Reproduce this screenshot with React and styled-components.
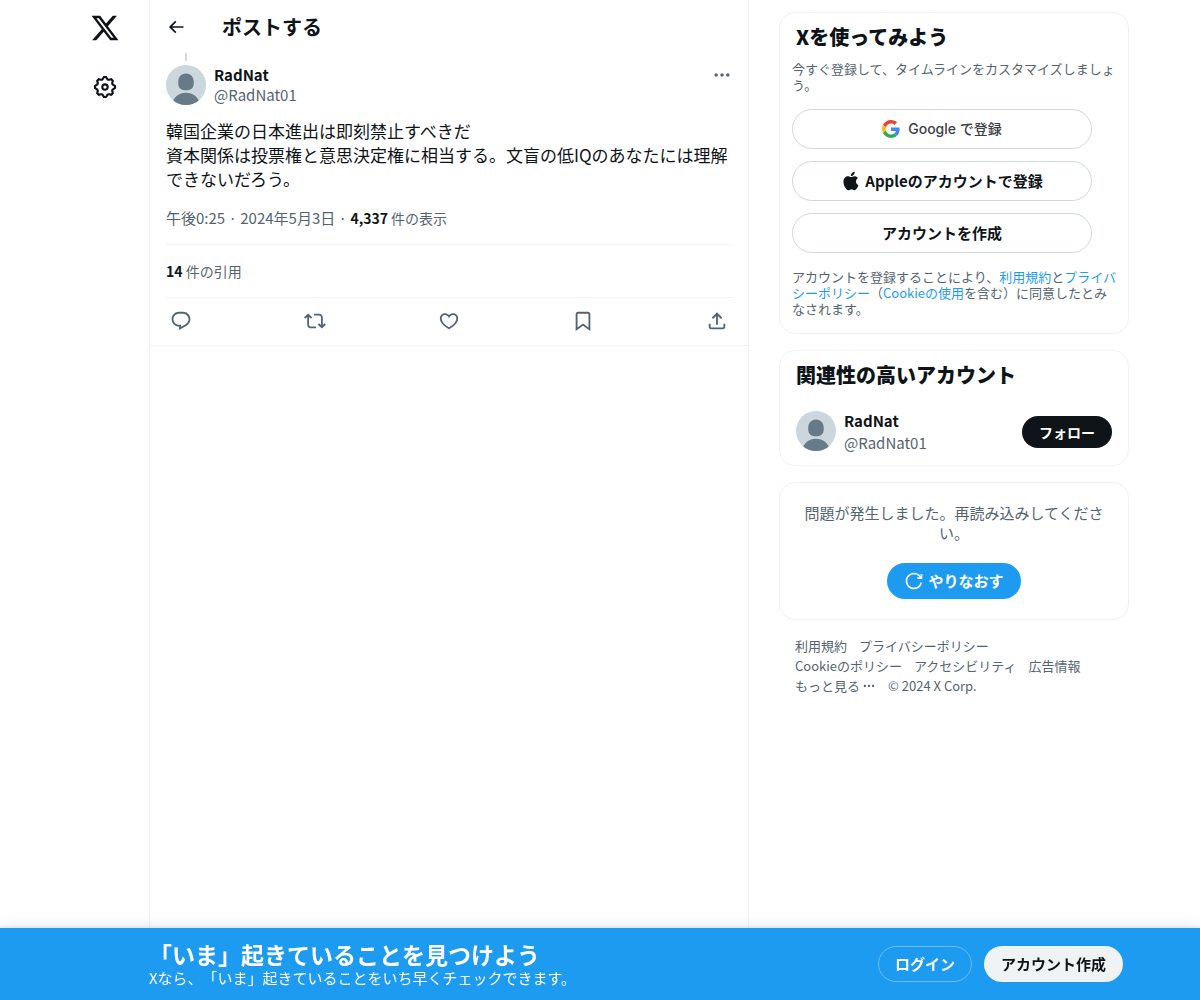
import React from 'react';
import styled, { createGlobalStyle } from 'styled-components';

const GlobalStyle = createGlobalStyle`
  *, *::before, *::after {
    box-sizing: border-box;
  }

  body {
    margin: 0;
    background: #fff;
    color: #0f1419;
    font-family: "Noto Sans CJK JP", sans-serif;
    font-size: 15px;
    line-height: 20px;
    text-spacing-trim: space-all;
  }

  button {
    font-family: inherit;
    cursor: pointer;
  }

  h1, h2, p {
    margin: 0;
  }
`;

const paths = {
  x: 'M18.244 2.25h3.308l-7.227 8.26 8.502 11.24H16.17l-5.214-6.817L4.99 21.75H1.68l7.73-8.835L1.254 2.25H8.08l4.713 6.231zm-1.161 17.52h1.833L7.084 4.126H5.117z',
  settings: 'M10.54 1.75h2.92l1.57 2.36c.11.17.32.25.53.21l2.53-.59 2.17 2.17-.58 2.54c-.05.2.04.41.21.53l2.36 1.57v2.92l-2.36 1.57c-.17.12-.26.33-.21.53l.58 2.54-2.17 2.17-2.53-.59c-.21-.04-.42.04-.53.21l-1.57 2.36h-2.92l-1.58-2.36c-.11-.17-.32-.25-.52-.21l-2.54.59-2.17-2.17.58-2.54c.05-.2-.03-.41-.21-.53l-2.35-1.57v-2.92L4.1 8.97c.18-.12.26-.33.21-.53L3.73 5.9 5.9 3.73l2.54.59c.2.04.41-.04.52-.21l1.58-2.36zm1.07 2l-.98 1.47C10.05 6.08 9 6.5 7.99 6.27l-1.46-.34-.6.6.33 1.46c.24 1.01-.18 2.07-1.05 2.64l-1.46.98v.78l1.46.98c.87.57 1.29 1.63 1.05 2.64l-.33 1.46.6.6 1.46-.34c1.01-.23 2.06.19 2.64 1.05l.98 1.47h.78l.97-1.47c.58-.86 1.63-1.28 2.65-1.05l1.45.34.61-.6-.34-1.46c-.23-1.01.18-2.07 1.05-2.64l1.47-.98v-.78l-1.47-.98c-.87-.57-1.28-1.63-1.05-2.64l.34-1.46-.61-.6-1.45.34c-1.02.23-2.07-.19-2.65-1.05l-.97-1.47h-.78zM12 10.5c-.83 0-1.5.67-1.5 1.5s.67 1.5 1.5 1.5c.82 0 1.5-.67 1.5-1.5s-.68-1.5-1.5-1.5zM8.5 12c0-1.93 1.56-3.5 3.5-3.5 1.93 0 3.5 1.57 3.5 3.5s-1.57 3.5-3.5 3.5c-1.94 0-3.5-1.57-3.5-3.5z',
  back: 'M7.414 13l5.043 5.04-1.414 1.42L3.586 12l7.457-7.46 1.414 1.42L7.414 11H21v2H7.414z',
  more: 'M3 12c0-1.1.9-2 2-2s2 .9 2 2-.9 2-2 2-2-.9-2-2zm9 2c1.1 0 2-.9 2-2s-.9-2-2-2-2 .9-2 2 .9 2 2 2zm7 0c1.1 0 2-.9 2-2s-.9-2-2-2-2 .9-2 2 .9 2 2 2z',
  reply: 'M1.751 10c0-4.42 3.584-8 8.005-8h4.366c4.49 0 8.129 3.64 8.129 8.13 0 2.96-1.607 5.68-4.196 7.11l-8.054 4.46v-3.69h-.067c-4.49.1-8.183-3.51-8.183-8.01zm8.005-6c-3.317 0-6.005 2.69-6.005 6 0 3.37 2.77 6.08 6.138 6.01l.351-.01h1.761v2.3l5.087-2.81c1.951-1.08 3.163-3.13 3.163-5.36 0-3.39-2.744-6.13-6.129-6.13H9.756z',
  repost: 'M4.5 3.88l4.432 4.14-1.364 1.46L5.5 7.55V16c0 1.1.896 2 2 2H13v2H7.5c-2.209 0-4-1.79-4-4V7.55L1.432 9.48.068 8.02 4.5 3.88zM16.5 6H11V4h5.5c2.209 0 4 1.79 4 4v8.45l2.068-1.93 1.364 1.46-4.432 4.14-4.432-4.14 1.364-1.46 2.068 1.93V8c0-1.1-.896-2-2-2z',
  like: 'M16.697 5.5c-1.222-.06-2.679.51-3.89 2.16l-.805 1.09-.806-1.09C9.984 6.01 8.526 5.44 7.304 5.5c-1.243.07-2.349.78-2.91 1.91-.552 1.12-.633 2.78.479 4.82 1.074 1.97 3.257 4.27 7.129 6.61 3.87-2.34 6.052-4.64 7.126-6.61 1.111-2.04 1.03-3.7.477-4.82-.561-1.13-1.666-1.84-2.908-1.91zm4.187 7.69c-1.351 2.48-4.001 5.12-8.379 7.67l-.503.3-.504-.3c-4.379-2.55-7.029-5.19-8.382-7.67-1.36-2.5-1.41-4.86-.514-6.67.887-1.79 2.647-2.91 4.601-3.01 1.651-.09 3.368.56 4.798 2.01 1.429-1.45 3.146-2.1 4.796-2.01 1.954.1 3.714 1.22 4.601 3.01.896 1.81.846 4.17-.514 6.67z',
  bookmark: 'M4 4.5C4 3.12 5.119 2 6.5 2h11C18.881 2 20 3.12 20 4.5v18.44l-8-5.71-8 5.71V4.5zM6.5 4c-.276 0-.5.22-.5.5v14.56l6-4.29 6 4.29V4.5c0-.28-.224-.5-.5-.5h-11z',
  share: 'M12 2.59l5.7 5.7-1.41 1.42L13 6.41V16h-2V6.41l-3.3 3.3-1.41-1.42L12 2.59zM21 15l-.02 3.51c0 1.38-1.12 2.49-2.5 2.49H5.5C4.11 21 3 19.88 3 18.5V15h2v3.5c0 .28.22.5.5.5h12.98c.28 0 .5-.22.5-.5L19 15h2z',
  retry: 'M12 4c-4.418 0-8 3.58-8 8s3.582 8 8 8c3.806 0 6.993-2.66 7.802-6.22l1.95.44C20.742 18.67 16.76 22 12 22 6.477 22 2 17.52 2 12S6.477 2 12 2c3.272 0 6.176 1.57 8 4V3.5h2v6h-6v-2h2.616C17.175 5.39 14.749 4 12 4z',
  apple: 'M16.365 1.43c0 1.14-.493 2.27-1.177 3.08-.744.9-1.99 1.57-2.987 1.57-.12 0-.23-.02-.3-.03-.01-.06-.04-.22-.04-.39 0-1.15.572-2.27 1.206-2.98.804-.94 2.142-1.64 3.248-1.68.03.13.05.28.05.43zm4.565 15.71c-.03.07-.463 1.58-1.518 3.12-.945 1.34-1.94 2.71-3.43 2.71-1.517 0-1.9-.88-3.63-.88-1.698 0-2.302.91-3.67.91-1.377 0-2.332-1.26-3.428-2.8-1.287-1.82-2.323-4.63-2.323-7.28 0-4.28 2.797-6.55 5.552-6.55 1.448 0 2.675.95 3.6.95.865 0 2.222-1.01 3.902-1.01.613 0 2.886.06 4.374 2.19-.13.09-2.383 1.37-2.383 4.19 0 3.26 2.854 4.42 2.955 4.45z',
};

const Svg = styled.svg`
  display: block;
  flex: none;
  width: ${(props) => props.$size}px;
  height: ${(props) => props.$size}px;
  fill: currentColor;
`;

const Page = styled.div`
  display: flex;
  justify-content: center;
  min-height: 100vh;
  padding-right: 10px;
`;

const Nav = styled.nav`
  display: flex;
  flex: 0 0 88px;
  flex-direction: column;
  align-items: center;
  gap: 31px;
  padding-top: 14px;
`;

const NavLink = styled.a`
  display: flex;
  align-items: center;
  justify-content: center;
  height: 28px;
  color: #0f1419;
`;

const Column = styled.main`
  flex: 0 1 600px;
  min-width: 0;
  border: solid #eff3f4;
  border-width: 0 1px;
`;

const ColumnHeader = styled.header`
  display: flex;
  align-items: center;
  gap: 36px;
  height: 53px;
  padding: 0 16px;
`;

const ColumnTitle = styled.h1`
  font-size: 20px;
  font-weight: 700;
  line-height: 24px;
`;

const IconButton = styled.button`
  display: flex;
  padding: 0;
  border: 0;
  background: none;
  color: ${(props) => props.$color || '#0f1419'};
`;

const Post = styled.article`
  padding: 0 16px;
  border-bottom: 1px solid #eff3f4;
`;

const ThreadLine = styled.div`
  width: 2px;
  height: 8px;
  margin: 0 0 4px 19px;
  background: #cfd9de;
`;

const User = styled.div`
  display: flex;
  align-items: flex-start;
  gap: 8px;
`;

const Names = styled.div`
  display: flex;
  flex: 1;
  flex-direction: column;
  gap: ${(props) => props.$gap || 0}px;
`;

const Name = styled.a`
  color: #0f1419;
  font-weight: 700;
  text-decoration: none;
`;

const Handle = styled(Name)`
  color: #536471;
  font-weight: 400;
`;

const Body = styled.p`
  padding: 14px 0 1px;
  font-size: 17px;
  line-height: 24px;
  white-space: pre-line;
`;

const Meta = styled.div`
  padding: 16px 0;
  border-bottom: 1px solid #eff3f4;
  color: #536471;
`;

const Count = styled.span`
  font-size: 14px;

  strong {
    color: #0f1419;
    font-weight: 700;
  }
`;

const Actions = styled.div`
  display: flex;
  align-items: center;
  justify-content: space-between;
  height: 47px;
  padding: 0 4px 2px;
`;

const Sidebar = styled.aside`
  display: flex;
  flex: 0 0 350px;
  flex-direction: column;
  gap: 16px;
  margin-left: 30px;
  padding: 12px 0 100px;
`;

const Card = styled.section`
  border: 1px solid #eff3f4;
  border-radius: 16px;
`;

const SignupCard = styled(Card)`
  padding: 12px 10px 16px 12px;
`;

const AccountCard = styled(Card)`
  padding: 12px 16px;
`;

const ErrorCard = styled(Card)`
  display: flex;
  flex-direction: column;
  align-items: center;
  gap: 20px;
  padding: 20px;
  color: #536471;
  text-align: center;
`;

const CardTitle = styled.h2`
  margin: 0 0 ${(props) => props.$space}px ${(props) => props.$indent || 0}px;
  font-size: 20px;
  font-weight: 800;
  line-height: 24px;
`;

const Note = styled.p`
  color: #536471;
  font-size: 13px;
  line-height: 16px;

  a {
    color: #1d9bf0;
    text-decoration: none;
  }
`;

const ButtonStack = styled.div`
  display: flex;
  flex-direction: column;
  gap: 12px;
  max-width: 300px;
  margin: 16px 0;
`;

const Pill = styled.button`
  display: flex;
  align-items: center;
  justify-content: center;
  gap: 4px;
  height: ${(props) => props.$height || 36}px;
  padding: 0 16px;
  border: 1px solid ${(props) => props.$border || 'transparent'};
  border-radius: 20px;
  background: ${(props) => props.$background || 'transparent'};
  color: ${(props) => props.$color || '#0f1419'};
  font-size: ${(props) => props.$size || 15}px;
  font-weight: 700;
  line-height: 20px;
  white-space: nowrap;
`;

const GooglePill = styled(Pill)`
  gap: 8px;
  color: #3c4043;
  font-family: Inter, "Noto Sans CJK JP", sans-serif;
  font-weight: 500;
`;

const FollowPill = styled(Pill)`
  align-self: center;
`;

const FooterNav = styled.nav`
  display: flex;
  flex-wrap: wrap;
  padding: 0 16px;
  font-size: 13px;
`;

const FooterItem = styled.a`
  display: flex;
  align-items: center;
  gap: 2px;
  padding-right: 12px;
  color: #536471;
  text-decoration: none;
`;

const BottomBar = styled.div`
  position: fixed;
  right: 0;
  bottom: 0;
  left: 0;
  display: flex;
  justify-content: center;
  padding-right: 10px;
  background: #1d9bf0;
  color: #fff;
  box-shadow: rgba(101, 119, 134, 0.2) 0 0 15px, rgba(101, 119, 134, 0.15) 0 0 3px 1px;
`;

const BarInner = styled.div`
  display: flex;
  flex: 0 1 1068px;
  align-items: center;
  justify-content: space-between;
  height: 72px;
  padding: 0 6px 0 88px;
`;

const BarTitle = styled.p`
  font-size: 23px;
  font-weight: 700;
  line-height: 28px;
`;

const BarButtons = styled.div`
  display: flex;
  gap: 12px;
`;

function Icon({ name, size = 22 }) {
  return (
    <Svg $size={size} viewBox="0 0 24 24" aria-hidden="true">
      <path d={paths[name]} />
    </Svg>
  );
}

function GoogleLogo() {
  return (
    <Svg $size={18} viewBox="0 0 48 48" aria-hidden="true">
      <path fill="#EA4335" d="M24 9.5c3.54 0 6.71 1.22 9.21 3.6l6.85-6.85C35.9 2.38 30.47 0 24 0 14.62 0 6.51 5.38 2.56 13.22l7.98 6.19C12.43 13.72 17.74 9.5 24 9.5z" />
      <path fill="#4285F4" d="M46.98 24.55c0-1.57-.15-3.09-.38-4.55H24v9.02h12.94c-.58 2.96-2.26 5.48-4.78 7.18l7.73 6c4.51-4.18 7.09-10.36 7.09-17.65z" />
      <path fill="#FBBC05" d="M10.53 28.59c-.48-1.45-.76-2.99-.76-4.59s.27-3.14.76-4.59l-7.98-6.19C.92 16.46 0 20.12 0 24c0 3.88.92 7.54 2.56 10.78l7.97-6.19z" />
      <path fill="#34A853" d="M24 48c6.48 0 11.93-2.13 15.89-5.81l-7.73-6c-2.15 1.45-4.92 2.3-8.16 2.3-6.26 0-11.57-4.22-13.47-9.91l-7.98 6.19C6.51 42.62 14.62 48 24 48z" />
    </Svg>
  );
}

function Avatar() {
  return (
    <Svg $size={40} viewBox="0 0 40 40" role="img" aria-label="RadNat">
      <clipPath id="avatar">
        <circle cx="20" cy="20" r="20" />
      </clipPath>
      <g clipPath="url(#avatar)">
        <path fill="#ccd6dd" d="M0 0h40v40H0z" />
        <path fill="#667a88" d="M20 8.500c5 0 7.800 3.500 7.800 8.800 0 5.500-2.200 8-7.800 8s-7.800-2.500-7.800-8C12.200 12 15 8.500 20 8.500zM6 40c1.500-8.500 7-12.300 14-12.300s12.500 3.800 14 12.300z" />
      </g>
    </Svg>
  );
}

const actions = [
  ['reply', '返信'],
  ['repost', 'リポスト'],
  ['like', 'いいね'],
  ['bookmark', 'ブックマーク'],
  ['share', '共有'],
];

export default function App() {
  return (
    <>
      <GlobalStyle />
      <Page>
        <Nav>
          <NavLink href="#" aria-label="X"><Icon name="x" size={30} /></NavLink>
          <NavLink href="#" aria-label="設定"><Icon name="settings" size={26} /></NavLink>
        </Nav>

        <Column>
          <ColumnHeader>
            <IconButton aria-label="戻る"><Icon name="back" size={20} /></IconButton>
            <ColumnTitle>ポストする</ColumnTitle>
          </ColumnHeader>
          <Post>
            <ThreadLine />
            <User>
              <Avatar />
              <Names>
                <Name href="#">RadNat</Name>
                <Handle href="#">@RadNat01</Handle>
              </Names>
              <IconButton $color="#536471" aria-label="もっと見る"><Icon name="more" size={20} /></IconButton>
            </User>
            <Body>
              {'韓国企業の日本進出は即刻禁止すべきだ\n資本関係は投票権と意思決定権に相当する。文盲の低IQのあなたには理解できないだろう。'}
            </Body>
            <Meta>
              午後0:25 · 2024年5月3日 · <Count><strong>4,337</strong> 件の表示</Count>
            </Meta>
            <Meta>
              <Count><strong>14</strong> 件の引用</Count>
            </Meta>
            <Actions>
              {actions.map(([name, label]) => (
                <IconButton key={name} $color="#536471" aria-label={label}>
                  <Icon name={name} />
                </IconButton>
              ))}
            </Actions>
          </Post>
        </Column>

        <Sidebar>
          <SignupCard>
            <CardTitle $space={12} $indent={4}>Xを使ってみよう</CardTitle>
            <Note>今すぐ登録して、タイムラインをカスタマイズしましょう。</Note>
            <ButtonStack>
              <GooglePill $height={40} $border="#cfd9de" $size={14}>
                <GoogleLogo />
                Google で登録
              </GooglePill>
              <Pill $height={40} $border="#cfd9de">
                <Icon name="apple" size={20} />
                Appleのアカウントで登録
              </Pill>
              <Pill $height={40} $border="#cfd9de">アカウントを作成</Pill>
            </ButtonStack>
            <Note>
              アカウントを登録することにより、<a href="#">利用規約</a>と<a href="#">プライバシーポリシー</a>（<a href="#">Cookieの使用</a>を含む）に同意したとみなされます。
            </Note>
          </SignupCard>

          <AccountCard>
            <CardTitle $space={24}>関連性の高いアカウント</CardTitle>
            <User>
              <Avatar />
              <Names $gap={2}>
                <Name href="#">RadNat</Name>
                <Handle href="#">@RadNat01</Handle>
              </Names>
              <FollowPill $height={32} $background="#0f1419" $color="#fff" $size={14}>フォロー</FollowPill>
            </User>
          </AccountCard>

          <ErrorCard>
            <p>問題が発生しました。再読み込みしてください。</p>
            <Pill $background="#1d9bf0" $color="#fff">
              <Icon name="retry" size={20} />
              やりなおす
            </Pill>
          </ErrorCard>

          <FooterNav>
            <FooterItem href="#">利用規約</FooterItem>
            <FooterItem href="#">プライバシーポリシー</FooterItem>
            <FooterItem href="#">Cookieのポリシー</FooterItem>
            <FooterItem href="#">アクセシビリティ</FooterItem>
            <FooterItem href="#">広告情報</FooterItem>
            <FooterItem href="#">もっと見る<Icon name="more" size={14} /></FooterItem>
            <FooterItem as="span">© 2024 X Corp.</FooterItem>
          </FooterNav>
        </Sidebar>
      </Page>

      <BottomBar>
        <BarInner>
          <div>
            <BarTitle>「いま」起きていることを見つけよう</BarTitle>
            <p>Xなら、「いま」起きていることをいち早くチェックできます。</p>
          </div>
          <BarButtons>
            <Pill $border="#6bbff5" $color="#fff">ログイン</Pill>
            <Pill $background="#eff3f4">アカウント作成</Pill>
          </BarButtons>
        </BarInner>
      </BottomBar>
    </>
  );
}
